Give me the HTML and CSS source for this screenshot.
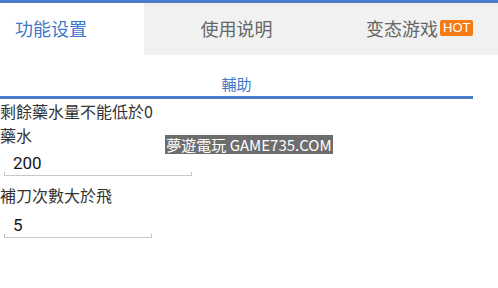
FILE: index.html
```html
<!DOCTYPE html>
<html>
<head>
    <meta charset="UTF-8">
    <title>功能设置</title>
    <link rel="stylesheet" href="styles.css">
</head>
<body>
    <div class="topbar"></div>
    <div class="tabs">
        <div class="tab tab-active">功能设置</div>
        <div class="tab tab-mid">使用说明</div>
        <div class="tab tab-last">变态游戏<span class="hot">HOT</span></div>
    </div>

    <div class="section">
        <div class="section-head">輔助</div>
    </div>

    <div class="form">
        <div class="label">剩餘藥水量不能低於0</div>
        <div class="label">藥水</div>
        <div class="field field-wide"><input type="text" value="200"></div>
        <div class="label">補刀次數大於飛</div>
        <div class="field field-narrow"><input type="text" value="5"></div>
    </div>

    <div class="watermark">夢遊電玩 GAME735.COM</div>
</body>
</html>
```

FILE: styles.css
```css
body {
    margin: 0;
    background-color: #ffffff;
    font-family: "Noto Sans CJK SC", "Noto Sans", sans-serif;
    position: relative;
    width: 498px;
    height: 288px;
    overflow: hidden;
}

.topbar {
    height: 3px;
    background-color: #4a7cc8;
}

.tabs {
    display: flex;
    height: 52px;
    background-color: #f1f1f1;
}
.tab {
    display: flex;
    align-items: center;
    font-size: 18px;
    color: #666666;
    padding-bottom: 2px;
}
.tab-active {
    width: 144px;
    padding-left: 15px;
    box-sizing: border-box;
    background-color: #ffffff;
    color: #3f78c8;
}
.tab-mid {
    width: 185px;
    justify-content: center;
}
.tab-last {
    flex: 1;
    padding-left: 37px;
}
.hot {
    display: inline-block;
    margin-left: 2px;
    background-color: #f47b16;
    color: #ffffff;
    font-family: "Liberation Sans", Arial, sans-serif;
    font-size: 13px;
    line-height: 16px;
    height: 16px;
    padding: 0 3px;
    border-radius: 2px;
}

.section {
    width: 473px;
    padding-top: 19px;
}
.section-head {
    text-align: center;
    font-size: 15px;
    line-height: 20px;
    color: #3f78c8;
    padding-bottom: 2px;
    border-bottom: 3px solid #4a7cc8;
}

.form {
    display: flex;
    flex-direction: column;
    align-items: flex-start;
}
.label {
    font-size: 16px;
    line-height: 24px;
    color: #333333;
}
.field {
    position: relative;
    margin-left: 4px;
    height: 28px;
    border-bottom: 1px solid #c8c8c8;
}
.field::before,
.field::after {
    content: "";
    position: absolute;
    bottom: 0;
    width: 1px;
    height: 3px;
    background-color: #c8c8c8;
}
.field::before { left: 0; }
.field::after { right: 0; }
.field-wide { width: 188px; margin-bottom: 7px; }
.field-narrow { width: 148px; margin-top: 2px; }
.field input {
    border: none;
    outline: none;
    background: transparent;
    width: 100%;
    box-sizing: border-box;
    padding: 0 0 0 9px;
    margin-top: 5px;
    font-family: Roboto, "Noto Sans", sans-serif;
    font-size: 17px;
    line-height: 22px;
    color: #151515;
}

.watermark {
    position: absolute;
    left: 165px;
    top: 135px;
    width: 168px;
    height: 19px;
    background-color: #6d6d6d;
    color: #ffffff;
    font-size: 15px;
    line-height: 19px;
    text-align: center;
    white-space: nowrap;
}
```
